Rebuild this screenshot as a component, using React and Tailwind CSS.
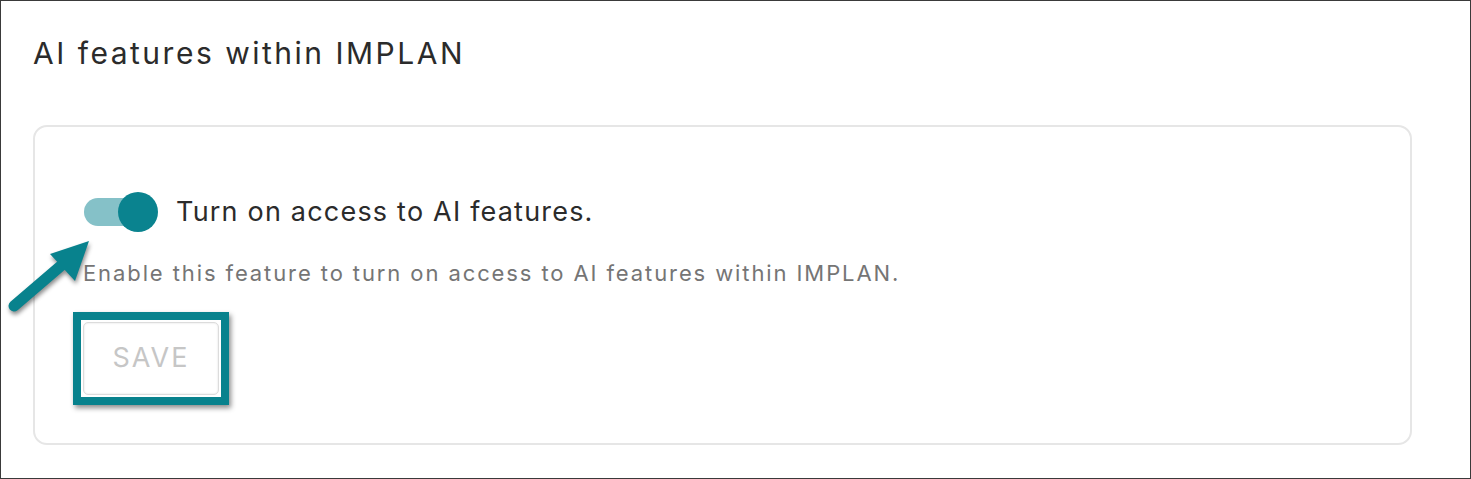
export default function App() {
  return (
    <div
      className="relative w-[1471px] h-[479px] border border-[#3a3a3a] bg-white overflow-hidden"
      style={{ fontFamily: "Inter, 'Noto Sans', sans-serif" }}
    >
      <h1 className="pl-[32px] pt-[34px] text-[30px] leading-[36px] text-[#2b2b2b] font-normal tracking-[2.5px]">
        AI features within IMPLAN
      </h1>
      <div className="ml-[32px] mt-[54px] w-[1379px] h-[320px] border-2 border-[#e6e6e6] rounded-[14px] pl-[48px] pt-[65px]">
        <div className="flex items-center h-[40px]">
          <div className="relative w-[76px] h-[40px]">
            <div className="absolute left-[1px] top-[6px] w-[66px] h-[28px] rounded-full bg-[#85c1c8]"></div>
            <div className="absolute left-[35px] top-0 w-[40px] h-[40px] rounded-full bg-[#0a838f]"></div>
          </div>
          <span className="ml-[17px] text-[27px] text-[#2b2b2b] tracking-[1.2px]">
            Turn on access to AI features.
          </span>
        </div>
        <p className="mt-[28px] text-[22px] leading-[26px] text-[#757575] tracking-[1.9px]">
          Enable this feature to turn on access to AI features within IMPLAN.
        </p>
        <div className="mt-[26px] -ml-[10px] w-[156px] h-[93px] border-[8px] border-[#08828d] shadow-[2px_3px_5px_rgba(0,0,0,0.45)] p-[2px]">
          <div className="w-full h-full rounded-[5px] border border-[#dcdcdc] shadow-[inset_0_0_2px_rgba(0,0,0,0.15)] bg-white flex items-center justify-center text-[27px] text-[#c6c6c6] tracking-[2px]">
            SAVE
          </div>
        </div>
      </div>
      <svg
        className="absolute left-0 top-[235px]"
        width="100"
        height="85"
        viewBox="0 235 100 85"
        style={{ filter: "drop-shadow(1px 3px 2px rgba(0,0,0,0.45))" }}
      >
        <line x1="13" y1="305" x2="62" y2="263" stroke="#08828d" strokeWidth="11" strokeLinecap="round" />
        <polygon points="88,240 49,253 74,280" fill="#08828d" />
      </svg>
    </div>
  );
}
